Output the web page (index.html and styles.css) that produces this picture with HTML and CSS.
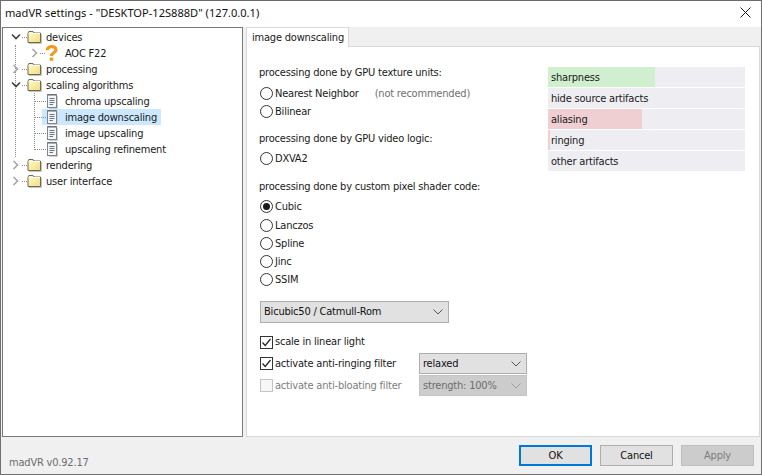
FILE: index.html
```html
<!DOCTYPE html>
<html lang="en">
<head>
<meta charset="utf-8">
<title>madVR settings</title>
<link rel="stylesheet" href="styles.css">
</head>
<body>
<svg class="defs" width="0" height="0" aria-hidden="true">
  <defs>
    <linearGradient id="fg" x1="0" y1="0" x2="1" y2="1"><stop offset="0" stop-color="#fffbd8"/><stop offset="1" stop-color="#f3dc7c"/></linearGradient>
    <symbol id="folder" viewBox="0 0 15 14">
      <path d="M1 3.5 L1.8 1.5 H6 L7 3 H13.5 V12.5 H1 Z" fill="url(#fg)" stroke="#6f6a4c"/>
      <path d="M1.5 3.5 H13" stroke="#fffef0"/>
      <path d="M14.5 4 V13.5 H2" fill="none" stroke="#c4c4c4"/>
    </symbol>
    <symbol id="doc" viewBox="0 0 12 16">
      <rect x="1.5" y="1.5" width="9" height="13" fill="#f4f6f8" stroke="#7b8590"/>
      <path d="M3 1 V3 M5 1 V3 M7 1 V3 M9 1 V3" stroke="#5f6468"/>
      <path d="M3.5 5.5 H8.5 M3.5 7.5 H8.5 M3.5 9.5 H8.5 M3.5 11.5 H7" stroke="#6a7480"/>
      <path d="M11.5 3 V15.5 H3" fill="none" stroke="#cfcfcf"/>
    </symbol>
    <symbol id="open" viewBox="0 0 10 8"><path d="M1 1.5 L5 5.5 L9 1.5" fill="none" stroke="#404040" stroke-width="1.6"/></symbol>
    <symbol id="closed" viewBox="0 0 8 10"><path d="M1.5 1 L5.5 5 L1.5 9" fill="none" stroke="#a6a6a6" stroke-width="1.6"/></symbol>
    <symbol id="chev" viewBox="0 0 10 6"><path d="M.5 .5 L5 5 L9.5 .5" fill="none" stroke="currentColor"/></symbol>
  </defs>
</svg>
<div class="window">
  <header class="titlebar">
    <span class="title">madVR settings - "DESKTOP-12S888D" (127.0.0.1)</span>
    <svg class="close" width="11" height="11" viewBox="0 0 11 11"><path d="M.5 .5 L10.5 10.5 M10.5 .5 L.5 10.5" stroke="#1a1a1a" fill="none"/></svg>
  </header>
  <div class="main">
    <nav class="tree">
      <span class="vline vline-root"></span>
      <span class="vline vline-sub"></span>
      <div class="row"><svg class="exp" width="10" height="8"><use href="#open"/></svg><span class="dots"></span><svg class="ico" width="15" height="14"><use href="#folder"/></svg><span class="lbl">devices</span></div>
      <div class="row child"><svg class="exp exp-c" width="8" height="10"><use href="#closed"/></svg><span class="dots"></span><svg class="ico-q" width="13" height="16" viewBox="0 0 13 16"><path d="M2.2 5.2 C2.2 .6 11 .6 11 4.8 C11 7.6 6.5 7.4 6.5 11" fill="none" stroke="#f39a1c" stroke-width="3.2"/><rect x="4.7" y="12.6" width="3.6" height="3.2" fill="#f39a1c"/></svg><span class="lbl">AOC F22</span></div>
      <div class="row"><svg class="exp" width="10" height="10"><use href="#closed" x="1" width="8" height="10"/></svg><span class="dots"></span><svg class="ico" width="15" height="14"><use href="#folder"/></svg><span class="lbl">processing</span></div>
      <div class="row"><svg class="exp" width="10" height="8"><use href="#open"/></svg><span class="dots"></span><svg class="ico" width="15" height="14"><use href="#folder"/></svg><span class="lbl">scaling algorithms</span></div>
      <div class="row leaf"><span class="dots dots-long"></span><svg class="ico-d" width="12" height="16"><use href="#doc"/></svg><span class="lbl">chroma upscaling</span></div>
      <div class="row leaf"><span class="dots dots-long"></span><svg class="ico-d" width="12" height="16"><use href="#doc"/></svg><span class="lbl sel">image downscaling</span></div>
      <div class="row leaf"><span class="dots dots-long"></span><svg class="ico-d" width="12" height="16"><use href="#doc"/></svg><span class="lbl">image upscaling</span></div>
      <div class="row leaf"><span class="dots dots-long"></span><svg class="ico-d" width="12" height="16"><use href="#doc"/></svg><span class="lbl">upscaling refinement</span></div>
      <div class="row"><svg class="exp" width="10" height="10"><use href="#closed" x="1" width="8" height="10"/></svg><span class="dots"></span><svg class="ico" width="15" height="14"><use href="#folder"/></svg><span class="lbl">rendering</span></div>
      <div class="row"><svg class="exp" width="10" height="10"><use href="#closed" x="1" width="8" height="10"/></svg><span class="dots"></span><svg class="ico" width="15" height="14"><use href="#folder"/></svg><span class="lbl">user interface</span></div>
    </nav>
    <section class="tabs">
      <div class="tabstrip"><div class="tab">image downscaling</div></div>
      <div class="page">
        <div class="form">
          <div class="head">processing done by GPU texture units:</div>
          <div class="opt o1"><span class="radio"></span>Nearest Neighbor<span class="note">(not recommended)</span></div>
          <div class="opt o2"><span class="radio"></span>Bilinear</div>
          <div class="head h2">processing done by GPU video logic:</div>
          <div class="opt o3"><span class="radio"></span>DXVA2</div>
          <div class="head h3">processing done by custom pixel shader code:</div>
          <div class="opt o4"><span class="radio on"></span>Cubic</div>
          <div class="opt o5"><span class="radio"></span>Lanczos</div>
          <div class="opt o5"><span class="radio"></span>Spline</div>
          <div class="opt o5"><span class="radio"></span>Jinc</div>
          <div class="opt o5"><span class="radio"></span>SSIM</div>
          <div class="combo wide"><span>Bicubic50 / Catmull-Rom</span><svg width="10" height="6"><use href="#chev"/></svg></div>
          <div class="chk c1"><span class="box"><svg width="13" height="13" viewBox="0 0 13 13"><path d="M2.5 6.5 L5.2 9.5 L10.5 3" fill="none" stroke="#222" stroke-width="1.2"/></svg></span>scale in linear light</div>
          <div class="chk c2">
            <span class="chk-l"><span class="box"><svg width="13" height="13" viewBox="0 0 13 13"><path d="M2.5 6.5 L5.2 9.5 L10.5 3" fill="none" stroke="#222" stroke-width="1.2"/></svg></span>activate anti-ringing filter</span>
            <div class="combo small"><span>relaxed</span><svg width="10" height="6"><use href="#chev"/></svg></div>
          </div>
          <div class="chk c3 off">
            <span class="chk-l"><span class="box"></span>activate anti-bloating filter</span>
            <div class="combo small dis"><span>strength: 100%</span><svg width="10" height="6"><use href="#chev"/></svg></div>
          </div>
        </div>
        <div class="bars">
          <div class="bar"><i class="fill green" style="width:107px"></i><span>sharpness</span></div>
          <div class="bar"><span>hide source artifacts</span></div>
          <div class="bar"><i class="fill red" style="width:94px"></i><span>aliasing</span></div>
          <div class="bar"><i class="fill red" style="width:2px"></i><span>ringing</span></div>
          <div class="bar"><span>other artifacts</span></div>
        </div>
      </div>
    </section>
  </div>
  <footer class="foot">
    <span class="ver">madVR v0.92.17</span>
    <div class="btns">
      <button class="btn def">OK</button>
      <button class="btn">Cancel</button>
      <button class="btn dis">Apply</button>
    </div>
  </footer>
</div>
</body>
</html>
```
FILE: styles.css
```css
* { box-sizing: border-box; }
html, body { margin: 0; padding: 0; }
body { width: 762px; height: 475px; overflow: hidden; font: 11px/16px "DejaVu Sans Condensed", "DejaVu Sans", sans-serif; font-stretch: condensed; letter-spacing: -0.2px; color: #1a1a1a; background: #f0f0f0; }
.defs { position: absolute; }
.window { width: 762px; height: 475px; border: 1px solid #707070; border-top-color: #6a6a6a; display: flex; flex-direction: column; background: #f0f0f0; }
.titlebar { height: 26px; flex: none; background: #fff; display: flex; align-items: center; justify-content: space-between; padding: 0 10px 3px 4px; }
.title { font: 11.1px "Noto Sans", sans-serif; letter-spacing: 0; color: #111; }
.main { height: 411px; flex: none; display: flex; padding-left: 1px; }
.tree { position: relative; width: 241px; height: 410px; flex: none; background: #fff; border: 1px solid #7a7a7a; padding-top: 1px; }
.vline { position: absolute; width: 1px; border-left: 1px dotted #8a8a8a; }
.vline-root { left: 12px; top: 17px; height: 112px; }
.vline-sub { left: 31px; top: 65px; height: 57px; }
.row { height: 16px; display: flex; align-items: center; position: relative; padding-left: 7px; }
.exp { width: 10px; flex: none; margin-left: 1px; }
.dots { width: 5px; border-top: 1px dotted #8a8a8a; margin-left: 1px; flex: none; }
.ico { flex: none; }
.lbl { padding: 1px 2px 0; margin-left: 2px; height: 16px; line-height: 16px; white-space: nowrap; }
.child { padding-left: 26px; }
.exp-c { margin-left: 2px; width: 8px; }
.ico-q { flex: none; }
.child .lbl { margin-left: 5px; }
.leaf { padding-left: 32px; }
.dots-long { width: 11px; margin: 0; position: relative; z-index: 1; }
.ico-d { flex: none; position: relative; z-index: 1; }
.leaf .lbl { margin-left: 5px; }
.leaf .lbl.sel { background: #cce8ff; margin-left: -16px; padding-left: 23px; padding-right: 4px; }
.tabs { margin-left: 3px; width: 514px; display: flex; flex-direction: column; }
.tabstrip { height: 20px; display: flex; flex: none; border-bottom: 1px solid #d9d9d9; }
.tab { width: 103px; height: 20px; background: #fff; border: 1px solid #d9d9d9; border-bottom: none; padding: 2px 0 0 5px; white-space: nowrap; }
.page { height: 390px; background: #fff; border: 1px solid #d9d9d9; border-top: none; display: flex; padding: 20px 14px 0 12px; }
.form { width: 289px; flex: none; }
.head { white-space: nowrap; height: 16px; margin-top: -4px; padding-top: 2px; line-height: 16px; }
.h2 { margin-top: 10px; }
.h3 { margin-top: 11px; }
.opt { height: 16px; display: flex; align-items: center; white-space: nowrap; padding: 2px 0 0 1px; }
.o1 { margin-top: 6px; }
.o2 { margin-top: 2px; }
.o3 { margin-top: 5px; }
.o4 { margin-top: 5px; }
.o5 { margin-top: 2px; }
.o4 + .o5 { margin-top: 3px; }
.radio { width: 13px; height: 13px; border: 1px solid #333; border-radius: 50%; background: #fff; margin: -2px 2px 0 0; flex: none; display: flex; align-items: center; justify-content: center; }
.radio.on::after { content: ""; width: 7px; height: 7px; background: #1a1a1a; border-radius: 50%; }
.note { margin-left: 16px; color: #6f6f6f; }
.combo { display: flex; align-items: center; justify-content: space-between; background: #e1e1e1; border: 1px solid #adadad; padding: 0 5px 0 3px; color: #111; height: 22px; white-space: nowrap; }
.combo svg { color: #555; flex: none; }
.wide { width: 189px; margin: 14px 0 0 1px; }
.small { width: 108px; height: 21px; }
.chk { display: flex; align-items: center; white-space: nowrap; height: 21px; padding-left: 1px; }
.c1 { margin-top: 9px; height: 20px; }
.c2 { margin-top: 1px; }
.c3 { margin-top: 1px; }
.chk-l { display: flex; align-items: center; width: 159px; flex: none; }
.box { width: 13px; height: 13px; border: 1px solid #333; background: #fff; margin-right: 2px; flex: none; display: block; }
.box svg { display: block; margin: -1px; }
.off { color: #7d7d7d; }
.off .box { border-color: #c4c4c4; background: #f7f7f7; }
.combo.dis { background: #ccc; border-color: #c4c4c4; color: #6d6d6d; }
.combo.dis svg { color: #a0a0a0; }
.bars { width: 197px; flex: none; display: flex; flex-direction: column; gap: 1px; }
.bar { position: relative; height: 20px; background: #eeeef2; display: flex; align-items: center; padding: 2px 0 0 3px; }
.bar span { position: relative; }
.fill { position: absolute; left: 0; top: 0; bottom: 0; }
.green { background: #cfefcf; }
.red { background: #efcfd1; }
.foot { flex: 1; display: flex; align-items: flex-end; justify-content: space-between; padding: 0 7px 8px 8px; }
.ver { color: #6d6d6d; line-height: 14px; margin-bottom: -4px; }
.btns { display: flex; gap: 8px; }
.btn { width: 73px; height: 21px; background: #e1e1e1; border: 1px solid #adadad; font: inherit; letter-spacing: inherit; color: #111; padding: 1px 0 0; }
.btn.def { border: 2px solid #0078d7; }
.btn.dis { background: #ccc; border-color: #bfbfbf; color: #7d7d7d; }
```
